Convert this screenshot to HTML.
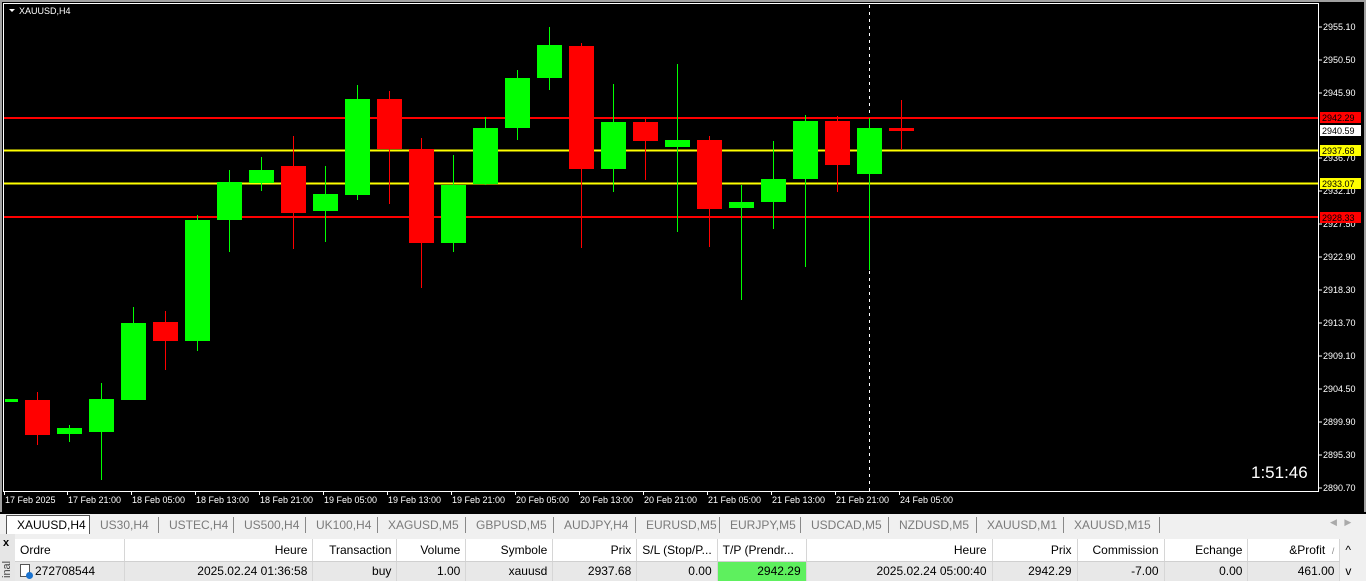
<!DOCTYPE html>
<html><head><meta charset="utf-8">
<style>
*{margin:0;padding:0;box-sizing:border-box}
body{width:1366px;height:581px;overflow:hidden;background:#f0f0f0;font-family:"Liberation Sans",sans-serif;position:relative}
#chart{position:absolute;left:0;top:0}
.tabs{position:absolute;left:0;top:512px;width:1366px;height:22px;background:#f0f0f0;border-top:2px solid #000;font-size:12px;color:#7a7a7a}
.tab{position:absolute;top:3px;height:16px;line-height:16px;border-right:1px solid #888;padding:0 10px}
.tab.act{background:#fff;color:#000;border:1px solid #555;border-bottom:none;top:1px;height:19px;line-height:18px}
.left{position:absolute;left:0;top:534px;width:15px;height:47px;background:#e6e6e6}
table{position:absolute;left:15px;top:539px;border-collapse:collapse;font-size:12px;color:#000}
td{height:22px;padding:0 5px;border-right:1px solid #d6d6d6;white-space:nowrap;overflow:hidden}
tr.h td{background:#fff;border-bottom:1px solid #d0d0d0}
tr.r td{background:#e8e8e8;height:20px}
.r2{text-align:right}
</style></head><body>
<svg id="chart" width="1366" height="512" xmlns="http://www.w3.org/2000/svg" font-family="Liberation Sans, sans-serif">
<rect width="1366" height="512" fill="#000"/>
<rect x="0" y="0" width="1366" height="2" fill="#a0a0a0"/>
<rect x="0" y="0" width="2" height="512" fill="#a0a0a0"/>
<rect x="1364" y="0" width="2" height="512" fill="#a0a0a0"/>
<rect x="3.5" y="3.5" width="1315" height="488" fill="none" stroke="#fff" stroke-width="1"/>
<path d="M9 9 L15 9 L12 12 Z" fill="#fff"/>
<text x="19" y="14" font-size="9" fill="#fff">XAUUSD,H4</text>
<line x1="869.5" y1="5" x2="869.5" y2="491" stroke="#fff" stroke-dasharray="3,4"/>
<g stroke-width="2">
<line x1="4" y1="118" x2="1318" y2="118" stroke="#f00"/>
<line x1="4" y1="150.5" x2="1318" y2="150.5" stroke="#ff0"/>
<line x1="4" y1="183.5" x2="1318" y2="183.5" stroke="#ff0"/>
<line x1="4" y1="217" x2="1318" y2="217" stroke="#f00"/>
</g>
<g id="c">
<!-- green candles -->
<g fill="#0f0" stroke="#0f0">
<rect x="5" y="399" width="13" height="3" stroke="none"/>
<line x1="69.5" y1="425" x2="69.5" y2="442"/><rect x="57" y="428" width="25" height="6" stroke="none"/>
<line x1="101.5" y1="383" x2="101.5" y2="480"/><rect x="89" y="399" width="25" height="33" stroke="none"/>
<line x1="133.5" y1="307" x2="133.5" y2="400"/><rect x="121" y="323" width="25" height="77" stroke="none"/>
<line x1="197.5" y1="215" x2="197.5" y2="351"/><rect x="185" y="220" width="25" height="121" stroke="none"/>
<line x1="229.5" y1="170" x2="229.5" y2="252"/><rect x="217" y="182" width="25" height="38" stroke="none"/>
<line x1="261.5" y1="157" x2="261.5" y2="191"/><rect x="249" y="170" width="25" height="13" stroke="none"/>
<line x1="325.5" y1="166" x2="325.5" y2="242"/><rect x="313" y="194" width="25" height="17" stroke="none"/>
<line x1="357.5" y1="85" x2="357.5" y2="200"/><rect x="345" y="99" width="25" height="96" stroke="none"/>
<line x1="453.5" y1="155" x2="453.5" y2="252"/><rect x="441" y="185" width="25" height="58" stroke="none"/>
<line x1="485.5" y1="117" x2="485.5" y2="185"/><rect x="473" y="128" width="25" height="56" stroke="none"/>
<line x1="517.5" y1="70" x2="517.5" y2="140"/><rect x="505" y="78" width="25" height="50" stroke="none"/>
<line x1="549.5" y1="27" x2="549.5" y2="90"/><rect x="537" y="45" width="25" height="33" stroke="none"/>
<line x1="613.5" y1="84" x2="613.5" y2="192"/><rect x="601" y="122" width="25" height="47" stroke="none"/>
<line x1="677.5" y1="64" x2="677.5" y2="232"/><rect x="665" y="140" width="25" height="7" stroke="none"/>
<line x1="741.5" y1="185" x2="741.5" y2="300"/><rect x="729" y="202" width="25" height="6" stroke="none"/>
<line x1="773.5" y1="141" x2="773.5" y2="229"/><rect x="761" y="179" width="25" height="23" stroke="none"/>
<line x1="805.5" y1="115" x2="805.5" y2="267"/><rect x="793" y="121" width="25" height="58" stroke="none"/>
<line x1="869.5" y1="118" x2="869.5" y2="270"/><rect x="857" y="128" width="25" height="46" stroke="none"/>
</g>
<g fill="#f00" stroke="#f00">
<line x1="37.5" y1="392" x2="37.5" y2="445"/><rect x="25" y="400" width="25" height="35" stroke="none"/>
<line x1="165.5" y1="311" x2="165.5" y2="370"/><rect x="153" y="322" width="25" height="19" stroke="none"/>
<line x1="293.5" y1="136" x2="293.5" y2="249"/><rect x="281" y="166" width="25" height="47" stroke="none"/>
<line x1="389.5" y1="91" x2="389.5" y2="204"/><rect x="377" y="99" width="25" height="50" stroke="none"/>
<line x1="421.5" y1="138" x2="421.5" y2="288"/><rect x="409" y="149" width="25" height="94" stroke="none"/>
<line x1="581.5" y1="43" x2="581.5" y2="248"/><rect x="569" y="46" width="25" height="123" stroke="none"/>
<line x1="645.5" y1="118" x2="645.5" y2="180"/><rect x="633" y="122" width="25" height="19" stroke="none"/>
<line x1="709.5" y1="136" x2="709.5" y2="247"/><rect x="697" y="140" width="25" height="69" stroke="none"/>
<line x1="837.5" y1="116" x2="837.5" y2="192"/><rect x="825" y="121" width="25" height="44" stroke="none"/>
<line x1="901.5" y1="100" x2="901.5" y2="150"/><rect x="889" y="128" width="25" height="3" stroke="none"/>
</g>
</g>
<g font-size="9" fill="#fff">
<text x="1323" y="30">2955.10</text><text x="1323" y="63">2950.50</text><text x="1323" y="96">2945.90</text>
<text x="1323" y="161">2936.70</text><text x="1323" y="194">2932.10</text><text x="1323" y="227">2927.50</text>
<text x="1323" y="260">2922.90</text><text x="1323" y="293">2918.30</text><text x="1323" y="326">2913.70</text>
<text x="1323" y="359">2909.10</text><text x="1323" y="392">2904.50</text><text x="1323" y="425">2899.90</text>
<text x="1323" y="458">2895.30</text><text x="1323" y="491">2890.70</text>
</g>
<g stroke="#fff"><line x1="1318" y1="27" x2="1322" y2="27"/><line x1="1318" y1="60" x2="1322" y2="60"/><line x1="1318" y1="93" x2="1322" y2="93"/><line x1="1318" y1="158" x2="1322" y2="158"/><line x1="1318" y1="191" x2="1322" y2="191"/><line x1="1318" y1="224" x2="1322" y2="224"/><line x1="1318" y1="257" x2="1322" y2="257"/><line x1="1318" y1="290" x2="1322" y2="290"/><line x1="1318" y1="323" x2="1322" y2="323"/><line x1="1318" y1="356" x2="1322" y2="356"/><line x1="1318" y1="389" x2="1322" y2="389"/><line x1="1318" y1="422" x2="1322" y2="422"/><line x1="1318" y1="455" x2="1322" y2="455"/><line x1="1318" y1="488" x2="1322" y2="488"/></g>
<rect x="1320" y="112" width="41" height="11" fill="#f00"/><text x="1322" y="121" font-size="9" fill="#000">2942.29</text>
<rect x="1320" y="125" width="41" height="11" fill="#fff"/><text x="1322" y="134" font-size="9" fill="#000">2940.59</text>
<rect x="1320" y="145" width="41" height="11" fill="#ff0"/><text x="1322" y="154" font-size="9" fill="#000">2937.68</text>
<rect x="1320" y="178" width="41" height="11" fill="#ff0"/><text x="1322" y="187" font-size="9" fill="#000">2933.07</text>
<rect x="1320" y="212" width="41" height="11" fill="#f00"/><text x="1322" y="221" font-size="9" fill="#000">2928.33</text>
<text x="1251" y="478" font-size="17" fill="#fff">1:51:46</text>
<g font-size="9" fill="#fff">
<text x="5" y="503">17 Feb 2025</text><text x="68" y="503">17 Feb 21:00</text><text x="132" y="503">18 Feb 05:00</text>
<text x="196" y="503">18 Feb 13:00</text><text x="260" y="503">18 Feb 21:00</text><text x="324" y="503">19 Feb 05:00</text>
<text x="388" y="503">19 Feb 13:00</text><text x="452" y="503">19 Feb 21:00</text><text x="516" y="503">20 Feb 05:00</text>
<text x="580" y="503">20 Feb 13:00</text><text x="644" y="503">20 Feb 21:00</text><text x="708" y="503">21 Feb 05:00</text>
<text x="772" y="503">21 Feb 13:00</text><text x="836" y="503">21 Feb 21:00</text><text x="900" y="503">24 Feb 05:00</text>
</g>
<g stroke="#fff"><line x1="4.5" y1="491" x2="4.5" y2="495"/><line x1="67.5" y1="491" x2="67.5" y2="495"/><line x1="131.5" y1="491" x2="131.5" y2="495"/><line x1="195.5" y1="491" x2="195.5" y2="495"/><line x1="259.5" y1="491" x2="259.5" y2="495"/><line x1="323.5" y1="491" x2="323.5" y2="495"/><line x1="387.5" y1="491" x2="387.5" y2="495"/><line x1="451.5" y1="491" x2="451.5" y2="495"/><line x1="515.5" y1="491" x2="515.5" y2="495"/><line x1="579.5" y1="491" x2="579.5" y2="495"/><line x1="643.5" y1="491" x2="643.5" y2="495"/><line x1="707.5" y1="491" x2="707.5" y2="495"/><line x1="771.5" y1="491" x2="771.5" y2="495"/><line x1="835.5" y1="491" x2="835.5" y2="495"/><line x1="899.5" y1="491" x2="899.5" y2="495"/></g>
</svg>
<div class="tabs">
<div class="tab act" style="left:6px;width:84px">XAUUSD,H4</div>
<div class="tab" style="left:90px;width:69px">US30,H4</div>
<div class="tab" style="left:159px;width:75px">USTEC,H4</div>
<div class="tab" style="left:234px;width:72px">US500,H4</div>
<div class="tab" style="left:306px;width:72px">UK100,H4</div>
<div class="tab" style="left:378px;width:88px">XAGUSD,M5</div>
<div class="tab" style="left:466px;width:88px">GBPUSD,M5</div>
<div class="tab" style="left:554px;width:82px">AUDJPY,H4</div>
<div class="tab" style="left:636px;width:84px">EURUSD,M5</div>
<div class="tab" style="left:720px;width:81px">EURJPY,M5</div>
<div class="tab" style="left:801px;width:88px">USDCAD,M5</div>
<div class="tab" style="left:889px;width:88px">NZDUSD,M5</div>
<div class="tab" style="left:977px;width:87px">XAUUSD,M1</div>
<div class="tab" style="left:1064px;width:96px">XAUUSD,M15</div>
<div style="position:absolute;left:1330px;top:3px;color:#aaa;font-size:9px">◀ &nbsp; ▶</div>
</div>
<div class="left"><div style="font-size:11px;font-weight:bold;padding-left:3px;margin-top:3px">x</div><div style="position:absolute;left:1px;top:28px;font-size:11px;color:#444;transform:rotate(-90deg);transform-origin:left top;top:44px">inal</div></div>
<table>
<tr class="h"><td style="width:110px">Ordre</td><td class="r2" style="width:188px">Heure</td><td class="r2" style="width:84px">Transaction</td><td class="r2" style="width:69px">Volume</td><td class="r2" style="width:87px">Symbole</td><td class="r2" style="width:84px">Prix</td><td style="width:80px">S/L (Stop/P...</td><td style="width:89px">T/P (Prendr...</td><td class="r2" style="width:186px">Heure</td><td class="r2" style="width:85px">Prix</td><td class="r2" style="width:87px">Commission</td><td class="r2" style="width:84px">Echange</td><td class="r2" style="width:92px">&amp;Profit &nbsp;<span style="font-size:9px;color:#888">/</span></td><td style="width:26px;border:none;background:#f0f0f0">^</td></tr>
<tr class="r"><td><span style="display:inline-block;width:10px;height:13px;border:1px solid #555;background:#fff;vertical-align:-2px;margin-right:5px;position:relative"><span style="position:absolute;right:-4px;bottom:-3px;width:7px;height:7px;border-radius:50%;background:#1a73d0"></span></span>272708544</td><td class="r2">2025.02.24 01:36:58</td><td class="r2">buy</td><td class="r2">1.00</td><td class="r2">xauusd</td><td class="r2">2937.68</td><td class="r2">0.00</td><td class="r2" style="background:#5ef05e">2942.29</td><td class="r2">2025.02.24 05:00:40</td><td class="r2">2942.29</td><td class="r2">-7.00</td><td class="r2">0.00</td><td class="r2">461.00</td><td style="border:none;background:#f0f0f0">v</td></tr>
</table>
</body></html>
